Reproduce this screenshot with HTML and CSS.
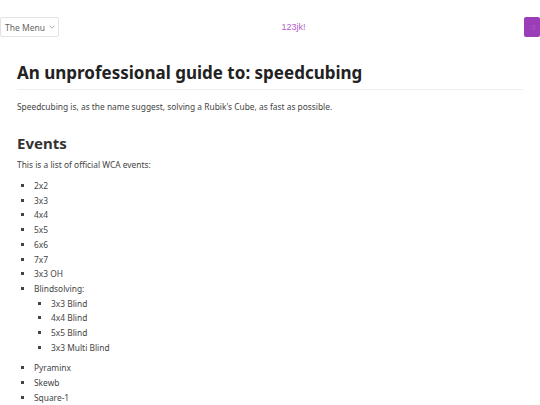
FILE: index.html
```html
<!DOCTYPE html>
<html>
<head>
<meta charset="utf-8">
<link rel="stylesheet" href="styles.css">
</head>
<body>
<header class="topbar">
  <button class="menu-btn">The Menu <svg class="chev" width="6" height="4" viewBox="0 0 6 4"><path d="M0.6 0.9 L3 3.1 L5.4 0.9" fill="none" stroke="#999" stroke-width="0.8"/></svg></button>
  <span class="brand">123jk!</span>
  <button class="face-btn">:3</button>
</header>
<main class="content">
  <h1 class="title">An unprofessional guide to: speedcubing</h1>
  <p class="text intro">Speedcubing is, as the name suggest, solving a Rubik's Cube, as fast as possible.</p>
  <h2 class="subtitle">Events</h2>
  <p class="text">This is a list of official WCA events:</p>
  <ul class="list">
    <li>2x2</li>
    <li>3x3</li>
    <li>4x4</li>
    <li>5x5</li>
    <li>6x6</li>
    <li>7x7</li>
    <li>3x3 OH</li>
    <li>Blindsolving:
      <ul class="sublist">
        <li>3x3 Blind</li>
        <li>4x4 Blind</li>
        <li>5x5 Blind</li>
        <li>3x3 Multi Blind</li>
      </ul>
    </li>
    <li>Pyraminx</li>
    <li>Skewb</li>
    <li>Square-1</li>
  </ul>
</main>
</body>
</html>
```
FILE: styles.css
```css
html, body {
  margin: 0;
  padding: 0;
  background: #fff;
}
body {
  font-family: "Noto Sans", sans-serif;
  color: #444;
}
.topbar {
  display: flex;
  align-items: center;
  justify-content: space-between;
  padding: 17px 0 0 0;
  height: 20px;
}
.menu-btn {
  font-family: "Noto Sans", sans-serif;
  font-size: 8.5px;
  color: #666;
  background: #fff;
  border: 1px solid #e3e3e3;
  border-radius: 2px;
  height: 20px;
  width: 59px;
  padding: 0 0 0 4px;
  white-space: nowrap;
  display: flex;
  align-items: center;
  gap: 4px;
}
.chev { display: block; }
.brand {
  font-family: "Liberation Sans", sans-serif;
  font-size: 9px;
  color: #b45cc8;
  margin-left: 4px;
}
.face-btn {
  width: 16px;
  height: 20px;
  border: none;
  border-radius: 2px;
  background: #9a3db6;
  color: #a85cc2;
  font-size: 8px;
  padding: 0;
}
.content {
  padding: 0 17px;
}
.title {
  font-size: 17px;
  font-weight: 700;
  color: #222;
  margin: 25px 0 0 0;
  padding-bottom: 5px;
  border-bottom: 1px solid #f0f0f0;
  line-height: 22px;
}
.subtitle {
  font-size: 15px;
  font-weight: 700;
  color: #333;
  margin: 20px 0 5px 0;
  line-height: 20px;
}
.text {
  font-size: 8.4px;
  margin: 0;
  line-height: 13px;
}
.intro { margin-top: 10px; }
.list {
  font-size: 8.4px;
  line-height: 14.7px;
  margin: 8px 0 0 0;
  padding-left: 17px;
  list-style: square;
}
.sublist {
  list-style: square;
  padding-left: 17px;
  margin: 0 0 6px 0;
}
```
